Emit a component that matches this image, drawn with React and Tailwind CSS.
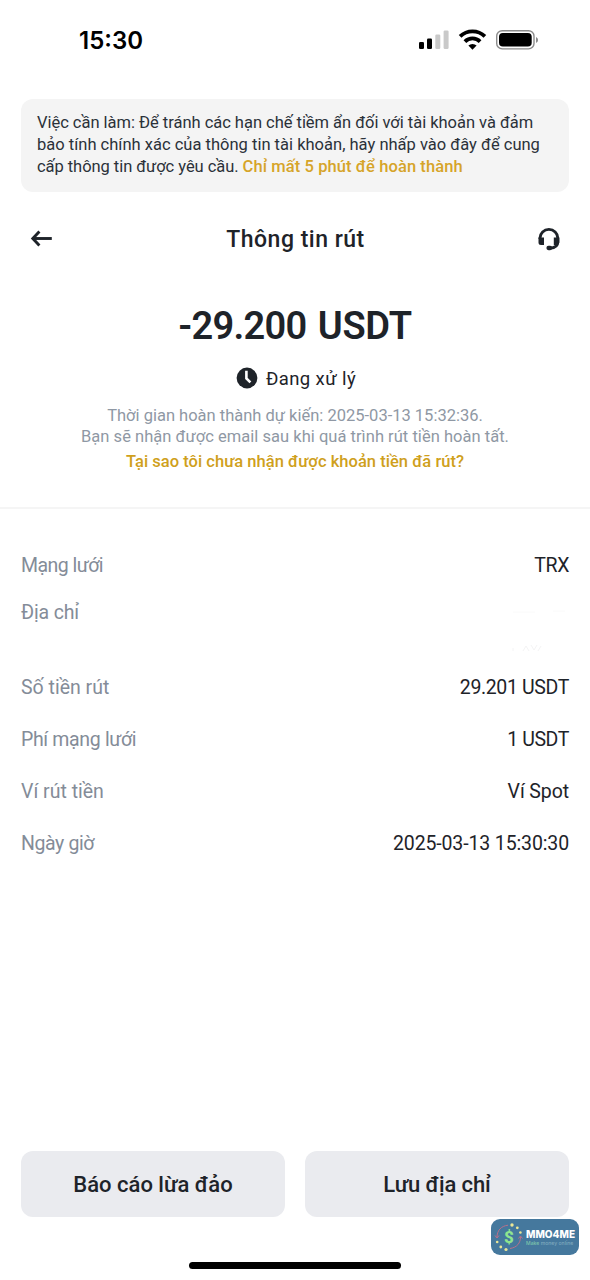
function StatusBar() {
  return (
    <div className="flex h-[99px] items-start justify-between pl-[79px] pr-[51px]">
      <span className="mt-[25px] font-[Inter,sans-serif] text-[24px] font-semibold leading-[32px] text-black">15:30</span>
      <svg className="mt-[28px]" width="120" height="24" viewBox="0 0 120 24">
        <rect x="0" y="14" width="5" height="7" rx="1.3" fill="#000" />
        <rect x="8" y="10.5" width="5" height="10.5" rx="1.3" fill="#000" />
        <rect x="16.3" y="6.5" width="5" height="14.5" rx="1.3" fill="#c9c9c9" />
        <rect x="24.6" y="2.5" width="5" height="18.5" rx="1.3" fill="#c9c9c9" />
        <g fill="none" stroke="#000">
          <path d="M41.1 8.4 A17.8 17.8 0 0 1 65.9 8.4" strokeWidth="3.8" />
          <path d="M45.9 13.6 A10.8 10.8 0 0 1 61.1 13.6" strokeWidth="3.8" />
        </g>
        <path d="M53.5 21.8 L49.4 17.6 A5.8 5.8 0 0 1 57.6 17.6 Z" fill="#000" />
        <rect x="77.7" y="2.7" width="37.3" height="18.2" rx="5.5" fill="none" stroke="#8c8c8c" strokeWidth="1.4" />
        <rect x="80" y="5" width="32.7" height="13.6" rx="3.8" fill="#000" />
        <path d="M117 9 a3.2 3.2 0 0 1 0 6 Z" fill="#8c8c8c" />
      </svg>
    </div>
  );
}

function Notice() {
  return (
    <div className="mx-[21px] h-[93px] whitespace-nowrap rounded-[12px] bg-[#f4f4f4] px-[16px] pt-[13px] text-[16.5px] leading-[22px] text-[#2b3139]">
      <div className="tracking-[-0.025px]">Việc cần làm: Để tránh các hạn chế tiềm ẩn đối với tài khoản và đảm</div>
      <div className="tracking-[0.01px]">bảo tính chính xác của thông tin tài khoản, hãy nhấp vào đây để cung</div>
      <div>
        <span className="tracking-[-0.05px]">cấp thông tin được yêu cầu. </span>
        <span className="font-medium tracking-[0.09px] text-[#d6a429]">Chỉ mất 5 phút để hoàn thành</span>
      </div>
    </div>
  );
}

function Header() {
  return (
    <div className="flex h-[94px] items-center justify-between pl-[30px] pr-[29px]">
      <svg width="24" height="24" viewBox="0 0 24 24" fill="none" stroke="#1e2329" strokeWidth="2.9">
        <path d="M2.6 11.5 H21.8" />
        <path d="M9.4 4.6 L2.8 11.5 L9.4 18.4" />
      </svg>
      <h1 className="pt-[1px] text-[23px] font-medium leading-[30px] tracking-[0.5px] text-[#1e2329]">Thông tin rút</h1>
      <svg width="24" height="24" viewBox="0 0 24 24">
        <path d="M3 12 V11 A8.9 8.6 0 0 1 20.8 11 V15 C20.8 18.8 18 20.8 13 21.2" fill="none" stroke="#1e2329" strokeWidth="2.9" />
        <path d="M1.5 10.6 H7 V18 H4 A2.5 2.5 0 0 1 1.5 15.5 Z M16.8 10.6 H22.3 V16 L20.4 18 H16.8 Z" fill="#1e2329" />
        <rect x="9.4" y="18.8" width="5.8" height="4.4" rx="2.1" fill="#1e2329" />
      </svg>
    </div>
  );
}

function Summary() {
  return (
    <div className="flex h-[223px] flex-col items-center whitespace-nowrap border-b-2 border-[#f5f5f5]">
      <div className="mt-px text-[38px] font-semibold leading-[78px] tracking-[-0.3px] text-[#1e2329]">
        <span className="tracking-[-0.7px]">-29.200</span>
        <span className="pl-[2px]"> USDT</span>
      </div>
      <div className="flex h-[26px] items-center gap-[8px] pl-[2px] text-[18.5px] leading-[26px] tracking-[0.4px] text-[#1e2329]">
        <svg width="22" height="22" viewBox="0 0 22 22">
          <circle cx="11" cy="11" r="10.4" fill="#1e2329" />
          <path d="M10.4 3.8 V11.4 L14.4 15.4" fill="none" stroke="#fff" strokeWidth="2.6" />
        </svg>
        <span className="pt-[1px]">Đang xử lý</span>
      </div>
      <div className="mt-[14px] text-center text-[16.5px] leading-[21px] text-[#8f98a4]">
        <div>Thời gian hoàn thành dự kiến: 2025-03-13 15:32:36.</div>
        <div className="tracking-[0.03px]">Bạn sẽ nhận được email sau khi quá trình rút tiền hoàn tất.</div>
      </div>
      <div className="mt-[4px] text-[16.5px] font-medium leading-[22px] tracking-[0.03px] text-[#cfa01c]">Tại sao tôi chưa nhận được khoản tiền đã rút?</div>
    </div>
  );
}

function Row({ label, value, labelClass = "", valueClass = "" }) {
  return (
    <div className="flex h-[52px] items-center justify-between text-[19.5px]">
      <span className={`text-[#848c98] ${labelClass}`}>{label}</span>
      <span className={`text-[#1e2329] ${valueClass}`}>{value}</span>
    </div>
  );
}

function AddressRow() {
  return (
    <div className="-mt-[5px] mb-[23px] flex h-[52px] items-center justify-between">
      <span className="text-[19.5px] tracking-[-0.15px] text-[#848c98]">Địa chỉ</span>
      <svg className="mt-[32px]" width="60" height="52" viewBox="0 0 60 52" fill="none" stroke="#f4f4f5" strokeWidth="1">
        <path d="M4 9 H26 M44 8 H56" stroke="#fafafa" />
        <path d="M4 48 V45 M14 48 L17 43 L20 48 M22 42 L25 47 L28 42 M29 48 L32 43" />
      </svg>
    </div>
  );
}

function Details() {
  return (
    <div className="flex flex-col px-[21px] pt-[31px]">
      <Row label="Mạng lưới" value="TRX" labelClass="tracking-[-0.55px]" valueClass="tracking-[-0.4px]" />
      <AddressRow />
      <Row label="Số tiền rút" value="29.201 USDT" valueClass="tracking-[-0.36px]" />
      <Row label="Phí mạng lưới" value="1 USDT" labelClass="tracking-[-0.34px]" valueClass="tracking-[-0.4px]" />
      <Row label="Ví rút tiền" value="Ví Spot" valueClass="tracking-[-0.1px]" />
      <Row label="Ngày giờ" value="2025-03-13 15:30:30" labelClass="tracking-[-0.4px]" valueClass="tracking-[-0.13px]" />
    </div>
  );
}

function Watermark() {
  return (
    <div className="absolute left-[491px] top-[1219px] flex h-[36px] w-[88px] items-center overflow-hidden rounded-[9px] bg-[#45789d]">
      <svg className="ml-[3px] shrink-0" width="30" height="36" viewBox="0 0 30 36">
        <g fill="none" stroke="#b9708a" strokeWidth="1">
          <path d="M3 18.5 C3 11.5 7 7 14 6.2" />
          <path d="M26.5 18 C26.5 24 23 28.5 16 29.5" />
          <path d="M1 16.5 L3 19 L5 16.5 M24.5 19.5 L26.5 17 L28.5 19.5" />
        </g>
        <g fill="#ece796">
          <circle cx="18" cy="6" r="1.7" />
          <circle cx="23.3" cy="8.8" r="1.4" />
          <circle cx="26.4" cy="13.5" r="1.3" />
          <circle cx="3.2" cy="23" r="1.3" />
          <circle cx="6.8" cy="28" r="1.4" />
          <circle cx="12" cy="30.5" r="1.6" />
        </g>
        <text x="14.8" y="24" textAnchor="middle" fontFamily="Roboto, sans-serif" fontSize="17" fontWeight="800" fill="#8fe58f">$</text>
      </svg>
      <div className="ml-[2px] flex flex-col whitespace-nowrap pt-[1px] font-[Inter,sans-serif]">
        <span className="text-[10px] font-extrabold leading-[11px] text-white">MMO4ME</span>
        <span className="text-[5.1px] font-medium leading-[6px] text-[#7fa9bd]"><span className="text-[#7cc4ac]">Make</span> money online</span>
      </div>
    </div>
  );
}

export default function App() {
  return (
    <div className="relative flex h-[1280px] w-[590px] flex-col overflow-hidden bg-white font-[Roboto,'Noto_Sans',sans-serif]">
      <StatusBar />
      <Notice />
      <Header />
      <Summary />
      <Details />
      <div className="mt-auto grid h-[66px] shrink-0 grid-cols-2 gap-[20px] px-[21px] text-[22px] text-[#1e2329]">
        <button className="rounded-[12px] bg-[#eaebef] font-medium">Báo cáo lừa đảo</button>
        <button className="rounded-[12px] bg-[#eaebef] font-medium tracking-[-0.1px]">Lưu địa chỉ</button>
      </div>
      <div className="mx-auto mb-[11px] mt-[45px] h-[7px] w-[212px] shrink-0 rounded-full bg-black" />
      <Watermark />
    </div>
  );
}
